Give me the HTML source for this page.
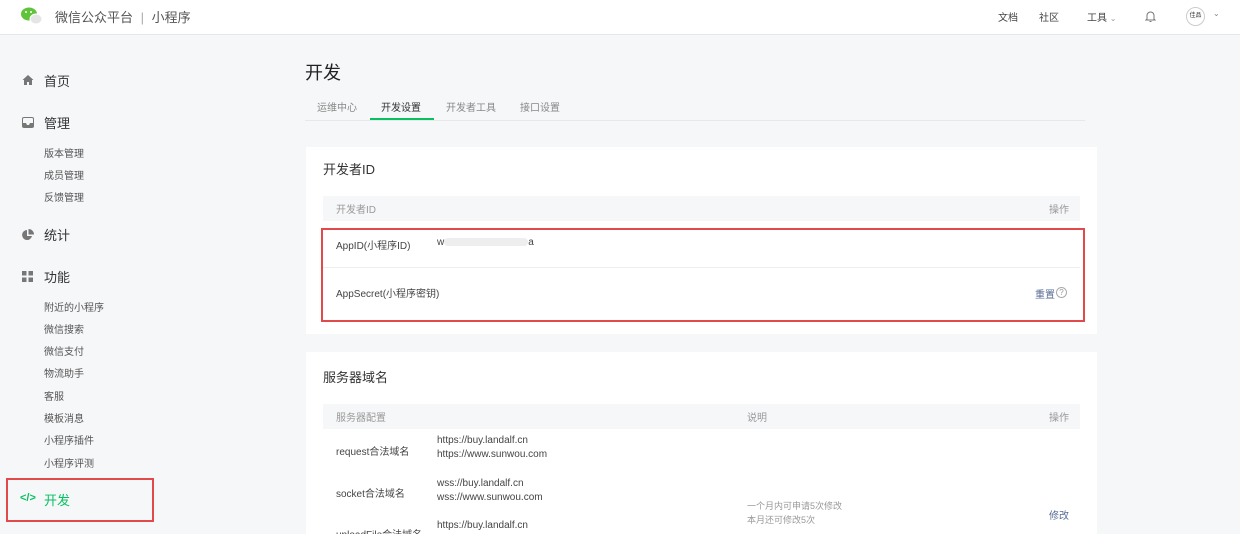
<!DOCTYPE html>
<html><head><meta charset="utf-8"><style>
*{margin:0;padding:0;box-sizing:border-box}
html,body{width:1240px;height:534px;overflow:hidden}
body{background:#f6f7f9;font-family:"Liberation Sans","Noto Sans CJK SC",sans-serif;color:#353535;position:relative}
.a{position:absolute;white-space:nowrap}
.hd{position:absolute;left:0;top:0;width:1240px;height:35px;background:#fff;border-bottom:1px solid #e4e6e9}
.s{font-size:10px;color:#555}
.m{font-size:13px;color:#333}
.card{position:absolute;background:#fff;left:306px;width:791px}
.th{position:absolute;left:17px;width:757px;height:25px;background:#f6f7f9;font-size:10px;color:#999}
.t{font-size:10px;color:#444}
</style></head><body>
<div class="hd">
<svg class="a" style="left:20px;top:6px" width="24" height="20" viewBox="0 0 24 20"><ellipse cx="9" cy="8" rx="8" ry="6.5" fill="#5fc43a"/><ellipse cx="16" cy="13" rx="6" ry="5" fill="#e5e5e5" stroke="#fff"/><circle cx="6" cy="6" r="1" fill="#fff"/><circle cx="11" cy="6" r="1" fill="#fff"/></svg>
<div class="a" style="left:55px;top:7px;font-size:13px;color:#555">微信公众平台 <span style="color:#aaa;margin:0 4px">|</span> 小程序</div>
<div class="a" style="left:998px;top:9px;font-size:10px;color:#444">文档</div>
<div class="a" style="left:1039px;top:9px;font-size:10px;color:#444">社区</div>
<div class="a" style="left:1087px;top:9px;font-size:10px;color:#444">工具 <span style="color:#999;font-size:8px">⌄</span></div>
<svg class="a" style="left:1145px;top:10px" width="11" height="13" viewBox="0 0 11 13"><path d="M2 9V5.5a3.5 3.5 0 017 0V9l1 1H1z M4.5 11.5h2" fill="none" stroke="#777" stroke-width="1"/></svg>
<div class="a" style="left:1186px;top:7px;width:19px;height:19px;border:1px solid #ccc;border-radius:50%;font-size:6px;text-align:center;line-height:17px">佳品</div>
<div class="a" style="left:1213px;top:9px;font-size:8px;color:#888">⌄</div>
</div>
<svg class="a" style="left:22px;top:74px" width="12" height="12" viewBox="0 0 12 12"><path d="M6 1L0.5 6H2v5h3V8h2v3h3V6h1.5z" fill="#777"/></svg>
<div class="a m" style="left:44px;top:71px">首页</div>
<svg class="a" style="left:22px;top:117px" width="12" height="11" viewBox="0 0 12 11"><rect x="0.5" y="0.5" width="11" height="10" rx="1.5" fill="none" stroke="#777"/><path d="M1 6h3l1 2h2l1-2h3v4H1z" fill="#777"/></svg>
<div class="a m" style="left:44px;top:113px">管理</div>
<div class="a s" style="left:44px;top:145px">版本管理</div>
<div class="a s" style="left:44px;top:167px">成员管理</div>
<div class="a s" style="left:44px;top:189px">反馈管理</div>
<svg class="a" style="left:22px;top:229px" width="12" height="12" viewBox="0 0 12 12"><path d="M5 1a5 5 0 105 6H5z M6.5 0v5.5H12A5.5 5.5 0 006.5 0z" fill="#777"/></svg>
<div class="a m" style="left:44px;top:225px">统计</div>
<svg class="a" style="left:22px;top:271px" width="11" height="11" viewBox="0 0 11 11"><g fill="#777"><rect width="4.5" height="4.5"/><rect x="6.5" width="4.5" height="4.5"/><rect y="6.5" width="4.5" height="4.5"/><rect x="6.5" y="6.5" width="4.5" height="4.5"/></g></svg>
<div class="a m" style="left:44px;top:267px">功能</div>
<div class="a s" style="left:44px;top:299px">附近的小程序</div>
<div class="a s" style="left:44px;top:321px">微信搜索</div>
<div class="a s" style="left:44px;top:343px">微信支付</div>
<div class="a s" style="left:44px;top:365px">物流助手</div>
<div class="a s" style="left:44px;top:388px">客服</div>
<div class="a s" style="left:44px;top:410px">模板消息</div>
<div class="a s" style="left:44px;top:432px">小程序插件</div>
<div class="a s" style="left:44px;top:455px">小程序评测</div>
<div class="a" style="left:6px;top:478px;width:148px;height:44px;border:2px solid #e04a4a"></div>
<div class="a" style="left:20px;top:492px;font-size:11px;color:#07c160;font-weight:bold">&lt;/&gt;</div>
<div class="a m" style="left:44px;top:490px;color:#07c160">开发</div>
<div class="a" style="left:305px;top:59px;font-size:18px;color:#222">开发</div>
<div class="a" style="left:305px;top:120px;width:780px;height:1px;background:#e6e8eb"></div>
<div class="a" style="left:317px;top:99px;font-size:10px;color:#888">运维中心</div>
<div class="a" style="left:381px;top:99px;font-size:10px;color:#333">开发设置</div>
<div class="a" style="left:370px;top:118px;width:64px;height:2px;background:#07c160"></div>
<div class="a" style="left:446px;top:99px;font-size:10px;color:#888">开发者工具</div>
<div class="a" style="left:520px;top:99px;font-size:10px;color:#888">接口设置</div>
<div class="card" style="top:147px;height:187px">
<div class="a" style="left:17px;top:12px;font-size:13px;color:#333">开发者ID</div>
<div class="th" style="top:49px"><span class="a" style="left:13px;top:5px">开发者ID</span><span class="a" style="left:726px;top:5px">操作</span></div>
<div class="a" style="left:17px;top:120px;width:757px;height:1px;background:#eee"></div>
<div class="a t" style="left:30px;top:90px">AppID(小程序ID)</div>
<div class="a t" style="left:131px;top:90px">w<span style="display:inline-block;width:84px;height:8px;background:#eee;vertical-align:middle;border-radius:4px"></span>a</div>
<div class="a t" style="left:30px;top:138px">AppSecret(小程序密钥)</div>
<div class="a" style="left:729px;top:139px;font-size:10px;color:#576b95">重置</div>
<div class="a" style="left:750px;top:140px;width:11px;height:11px;border:1px solid #aaa;border-radius:50%;font-size:8px;color:#999;text-align:center;line-height:9px">?</div>
<div class="a" style="left:15px;top:81px;width:764px;height:94px;border:2px solid #e04a4a"></div>
</div>
<div class="card" style="top:352px;height:200px">
<div class="a" style="left:17px;top:15px;font-size:13px;color:#333">服务器域名</div>
<div class="th" style="top:52px"><span class="a" style="left:13px;top:5px">服务器配置</span><span class="a" style="left:424px;top:5px">说明</span><span class="a" style="left:726px;top:5px">操作</span></div>
<div class="a t" style="left:30px;top:91px">request合法域名</div>
<div class="a t" style="left:131px;top:82px;line-height:14px">https://buy.landalf.cn<br>https://www.sunwou.com</div>
<div class="a t" style="left:30px;top:133px">socket合法域名</div>
<div class="a t" style="left:131px;top:125px;line-height:14px">wss://buy.landalf.cn<br>wss://www.sunwou.com</div>
<div class="a t" style="left:30px;top:174px">uploadFile合法域名</div>
<div class="a t" style="left:131px;top:168px">https://buy.landalf.cn</div>
<div class="a" style="left:441px;top:147px;font-size:9px;color:#999;line-height:14px">一个月内可申请5次修改<br>本月还可修改5次</div>
<div class="a" style="left:743px;top:155px;font-size:10px;color:#576b95">修改</div>
</div>
</body></html>
